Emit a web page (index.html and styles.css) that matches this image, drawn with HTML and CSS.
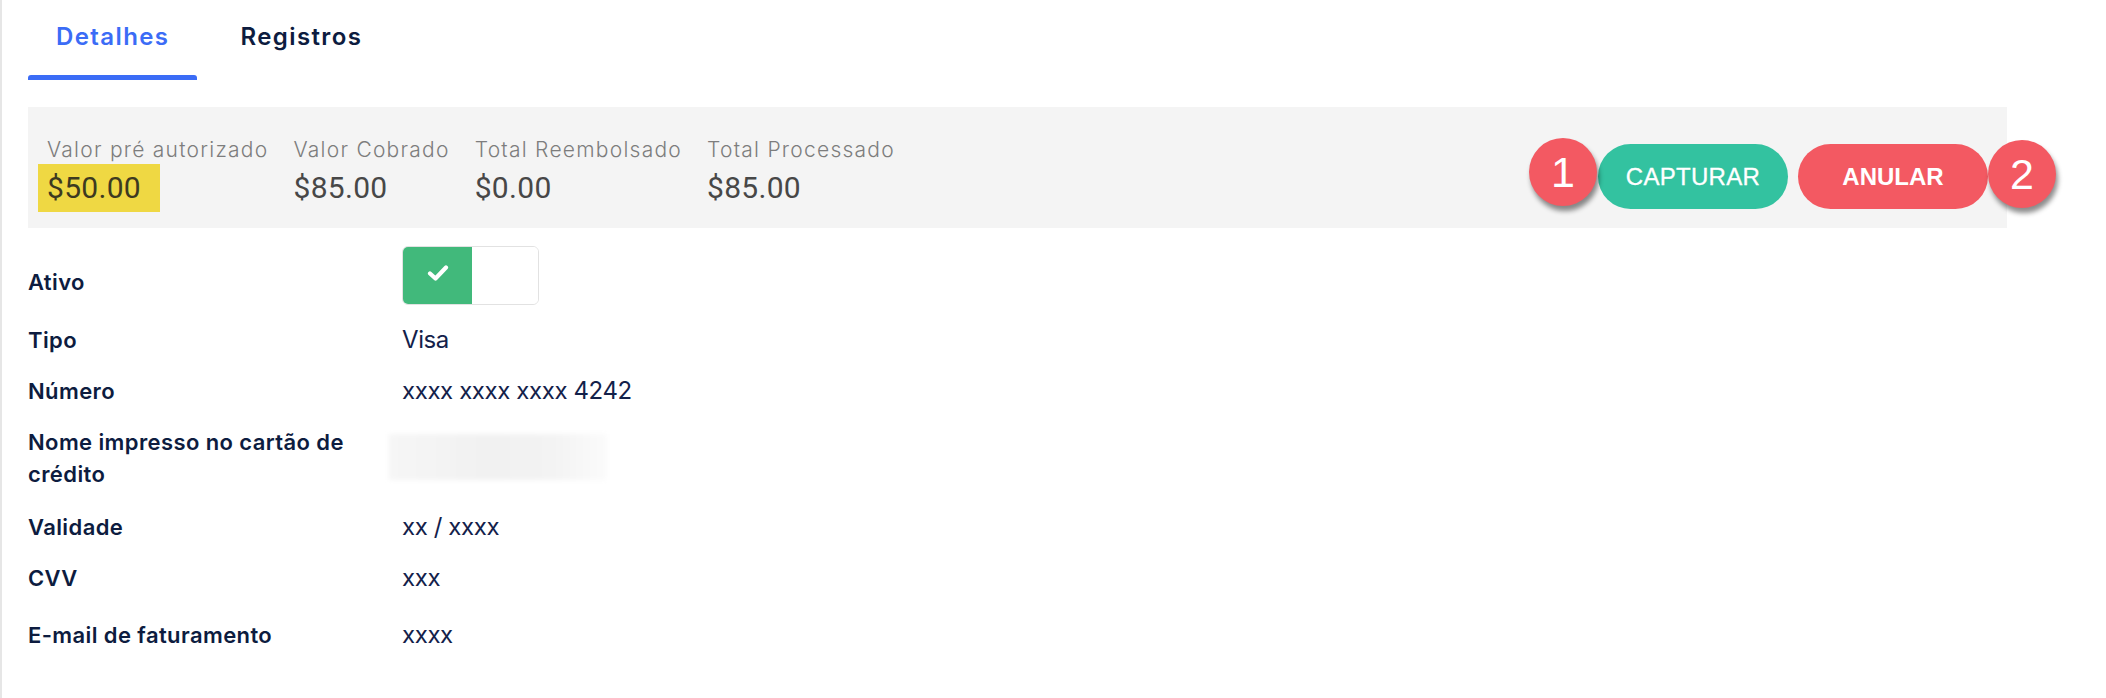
FILE: index.html
```html
<!DOCTYPE html>
<html lang="pt">
<head>
<meta charset="utf-8">
<title>Detalhes</title>
<link rel="stylesheet" href="styles.css">
</head>
<body>
<div class="page">
  <nav class="tabs">
    <div class="tab active">Detalhes</div>
    <div class="tab">Registros</div>
  </nav>

  <section class="summary">
    <div class="stats">
      <div class="stat">
        <div class="stat-label">Valor pré autorizado</div>
        <div class="stat-value highlight">$50.00</div>
      </div>
      <div class="stat">
        <div class="stat-label">Valor Cobrado</div>
        <div class="stat-value">$85.00</div>
      </div>
      <div class="stat">
        <div class="stat-label">Total Reembolsado</div>
        <div class="stat-value">$0.00</div>
      </div>
      <div class="stat">
        <div class="stat-label">Total Processado</div>
        <div class="stat-value">$85.00</div>
      </div>
    </div>
    <div class="actions">
      <div class="btn-wrap">
        <span class="badge badge-left">1</span>
        <button class="btn btn-capture">CAPTURAR</button>
      </div>
      <div class="btn-wrap">
        <button class="btn btn-cancel">ANULAR</button>
        <span class="badge badge-right">2</span>
      </div>
    </div>
  </section>

  <section class="details">
    <div class="row row-toggle">
      <div class="label label-toggle">Ativo</div>
      <div class="value">
        <div class="toggle">
          <div class="toggle-on">
            <svg width="22" height="16" viewBox="0 0 22 16"><polyline points="3,8.5 8.5,13.5 19,2.5" fill="none" stroke="#fff" stroke-width="4.2" stroke-linecap="round" stroke-linejoin="round"/></svg>
          </div>
          <div class="toggle-off"></div>
        </div>
      </div>
    </div>
    <div class="row">
      <div class="label">Tipo</div>
      <div class="value">Visa</div>
    </div>
    <div class="row">
      <div class="label">Número</div>
      <div class="value">xxxx xxxx xxxx 4242</div>
    </div>
    <div class="row">
      <div class="label">Nome impresso no cartão de crédito</div>
      <div class="value"><div class="blurred"></div></div>
    </div>
    <div class="row row-validade">
      <div class="label">Validade</div>
      <div class="value">xx / xxxx</div>
    </div>
    <div class="row">
      <div class="label">CVV</div>
      <div class="value">xxx</div>
    </div>
    <div class="row row-email">
      <div class="label">E-mail de faturamento</div>
      <div class="value">xxxx</div>
    </div>
  </section>
</div>
</body>
</html>
```

FILE: styles.css
```css
* { box-sizing: border-box; }

html, body {
  margin: 0;
  padding: 0;
  background: #ffffff;
}

body {
  font-family: Inter, "Noto Sans", sans-serif;
  color: #0d1c3f;
}

.page {
  min-height: 698px;
  border-left: 2px solid #e6e6e6;
  padding: 0 99px 0 26px;
}

/* Tabs */
.tabs {
  display: flex;
  gap: 15px;
}

.tab {
  position: relative;
  padding: 19px 28px 25px;
  font-size: 24px;
  line-height: 36px;
  font-weight: 600;
  letter-spacing: 1.4px;
  color: #0d1c3f;
}

.tab.active {
  color: #3b6cf6;
}

.tab.active::after {
  content: "";
  position: absolute;
  left: 0;
  right: 0;
  bottom: 0;
  height: 5px;
  background: #3b6cf6;
  border-radius: 3px 3px 0 0;
}

/* Summary */
.summary {
  margin-top: 27px;
  background: #f4f4f4;
  display: flex;
  justify-content: space-between;
  align-items: flex-start;
  padding: 29px 19px 16px 19px;
}

.stats {
  display: flex;
  gap: 25px;
}

.stat {
  display: flex;
  flex-direction: column;
  align-items: flex-start;
}

.stat-label {
  font-size: 21px;
  line-height: 28px;
  font-weight: 300;
  color: #7d7d7d;
  letter-spacing: 1.25px;
}

.stat-value {
  font-family: Roboto, "Liberation Sans", sans-serif;
  font-size: 30px;
  line-height: 48px;
  color: #474747;
  letter-spacing: 0.3px;
}

.stat-value.highlight {
  background: #efd843;
  margin-left: -9px;
  padding: 0 19px 0 9px;
  color: #3d3a20;
}

.actions {
  display: flex;
  gap: 10px;
  margin-top: 8px;
}

.btn-wrap {
  position: relative;
}

.btn {
  width: 190px;
  height: 65px;
  border: none;
  border-radius: 33px;
  color: #ffffff;
  font-family: "Liberation Sans", Arial, sans-serif;
  font-size: 24px;
  display: flex;
  align-items: center;
  justify-content: center;
  padding: 0;
}

.btn-capture {
  background: #33c2a0;
  font-weight: 400;
  letter-spacing: 0.3px;
  -webkit-text-stroke: 0.3px #ffffff;
}

.btn-cancel {
  background: #f35962;
  font-weight: 700;
}

.badge {
  position: absolute;
  top: -6px;
  width: 68px;
  height: 68px;
  border-radius: 50%;
  background: #f35962;
  color: #ffffff;
  font-family: "Liberation Sans", Arial, sans-serif;
  font-size: 43px;
  line-height: 68px;
  text-align: center;
  box-shadow: 2px 5px 5px rgba(0, 0, 0, 0.45);
}

.badge-left {
  right: calc(100% + 1px);
}

.badge-right {
  left: 100%;
  top: -4px;
}

/* Details */
.details {
  margin-top: 18px;
  display: flex;
  flex-direction: column;
  gap: 19px;
}

.row {
  display: grid;
  grid-template-columns: 374px 1fr;
  align-items: start;
}

.label {
  font-size: 22px;
  line-height: 32px;
  font-weight: 600;
  letter-spacing: 0.4px;
  color: #0d1c3f;
  padding-right: 20px;
}

.label-toggle {
  padding-top: 20px;
}

.value {
  font-size: 24px;
  line-height: 32px;
  font-weight: 400;
  letter-spacing: -0.4px;
  color: #13214a;
}

.row-validade { margin-top: 2px; }
.row-email { margin-top: 6px; }

.toggle {
  width: 137px;
  height: 59px;
  border: 1px solid #e2e2e2;
  border-radius: 6px;
  display: flex;
  overflow: hidden;
}

.toggle-on {
  width: 69px;
  background: #41b97b;
  display: flex;
  align-items: center;
  justify-content: center;
  padding-bottom: 6px;
}

.toggle-off {
  flex: 1;
  background: #ffffff;
}

.blurred {
  margin: 8px 0 0 -13px;
  width: 218px;
  height: 46px;
  background: linear-gradient(90deg, #f6f6f6 0%, #f1f1f1 45%, #f3f3f3 75%, #fbfbfb 100%);
  filter: blur(2px);
}
```
